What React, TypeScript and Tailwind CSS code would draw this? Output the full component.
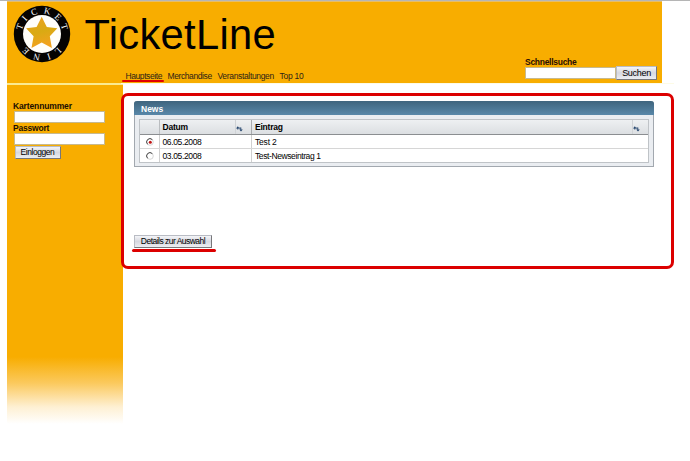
import type { ReactNode } from 'react';

function Logo() {
  return (
    <svg className="block h-[58px] w-[58px] shrink-0" viewBox="0 0 58 58">
      <defs>
        <linearGradient id="star" x1="0" y1="0" x2="0.25" y2="1">
          <stop offset="0" stopColor="#f0a023" />
          <stop offset="0.55" stopColor="#d9aa13" />
          <stop offset="1" stopColor="#f2a21e" />
        </linearGradient>
      </defs>
      <circle cx="29" cy="29" r="28.2" fill="#050302" />
      <circle cx="29" cy="29" r="19" fill="#fffefa" />
      <path
        d="M28.7 11.8 L33.8 22 L44.3 23.3 L36.8 31.2 L38.9 43 L28.7 37.6 L18.5 43 L20.6 31.2 L13.1 23.3 L23.6 22 Z"
        fill="url(#star)"
      />
      <g fill="#fff" fontSize="9" fontFamily="Liberation Serif, serif" textAnchor="middle">
        <text transform="rotate(-72 29 29)" x="29" y="8.5">T</text>
        <text transform="rotate(-48 29 29)" x="29" y="8.5">I</text>
        <text transform="rotate(-20 29 29)" x="29" y="8.5">C</text>
        <text transform="rotate(13 29 29)" x="29" y="8.5">K</text>
        <text transform="rotate(43 29 29)" x="29" y="8.5">E</text>
        <text transform="rotate(72 29 29)" x="29" y="8.5">T</text>
        <text transform="rotate(137 29 29)" x="29" y="8.5">L</text>
        <text transform="rotate(163 29 29)" x="29" y="8.5">I</text>
        <text transform="rotate(193 29 29)" x="29" y="8.5">N</text>
        <text transform="rotate(224 29 29)" x="29" y="8.5">E</text>
      </g>
    </svg>
  );
}

function Button({ children, className }: { children: ReactNode; className: string }) {
  return (
    <button
      className={`block whitespace-nowrap border border-t-[#b9bcc4] border-l-[#b9bcc4] border-r-[#77777a] border-b-[#77777a] bg-linear-to-b from-[#f4f5f8] via-[#d6d8e0] to-[#eceef2] text-center text-black ${className}`}
    >
      {children}
    </button>
  );
}

function SortIcon() {
  return (
    <svg className="block h-[6px] w-[7px]" viewBox="0 0 7 6">
      <path d="M0 2.4 L1.8 0.3 L3.6 2.4 H2.3 V3.6 H1.3 V2.4 Z M3.2 1.6 H5.3 V3.4 H6.8 L5 5.6 L3.2 3.4 H4.4 V2.5 H3.2 Z" fill="#27476f" />
    </svg>
  );
}

function Radio({ checked }: { checked?: boolean }) {
  return (
    <svg className="block h-2 w-2" viewBox="0 0 8 8">
      <circle cx="4" cy="4" r="3.3" fill="#fff" stroke="#d2d2d2" strokeWidth="0.9" />
      <path d="M1.6 6.3 A3.3 3.3 0 0 1 6.3 1.6" fill="none" stroke="#4a4a4a" strokeWidth="1" />
      {checked && <circle cx="4.3" cy="4.2" r="1.5" fill="#c01515" />}
    </svg>
  );
}

const news = [
  { date: '06.05.2008', title: 'Test 2', tracking: 'tracking-[-0.2px]' },
  { date: '03.05.2008', title: 'Test-Newseintrag 1', tracking: 'tracking-[-0.4px]' },
];

export default function App() {
  return (
    <div className="h-[461px] w-[690px] overflow-hidden bg-white font-['Liberation_Sans',Arial,sans-serif] text-[8.5px] leading-[10px] text-black">
      <div className="h-px bg-[#b5b5b5]" />
      <header className="ml-[7px] flex h-[82px] w-[655px] border-t border-[#e6bd68] bg-[#f8ad00]">
        <div className="pt-[3px] pl-[6px]">
          <Logo />
        </div>
        <div className="ml-[13.5px] w-[430px]">
          <h1 className="h-[66px] pt-[9px] text-[41.7px] leading-[48px] tracking-[0.3px]">TicketLine</h1>
          <nav className="ml-[37px] flex h-[16px] whitespace-nowrap text-[#2d2316]">
            <a className="flex w-[42px] flex-col">
              <span className="block h-[12px] pl-[4px] pt-[3px] tracking-[-0.42px]">Hauptseite</span>
              <span className="block h-[2px] w-[42px] shrink-0 rounded-full bg-[#e00000]" />
            </a>
            <a className="ml-[4px] w-[50px] pt-[3px] tracking-[-0.4px]">Merchandise</a>
            <a className="w-[62px] pt-[3px] tracking-[-0.34px]">Veranstaltungen</a>
            <a className="pt-[3px] tracking-[-0.25px]">Top 10</a>
          </nav>
        </div>
        <form className="ml-[10.5px] w-[133px] pt-[55px]">
          <label className="block h-[9px] whitespace-nowrap font-bold tracking-[-0.28px] text-[#2a0d05]">Schnellsuche</label>
          <div className="flex">
            <div className="mt-[1px] h-[12px] w-[91px] border border-[#c7b98e] bg-white" />
            <Button className="h-[14px] w-[41px] text-[9px] leading-[13px] tracking-[-0.3px]">Suchen</Button>
          </div>
        </form>
      </header>
      <div className="flex pl-[7px]">
        <aside className="h-[341px] w-[116px] shrink-0 border-t-2 border-[#fbea91] bg-[linear-gradient(to_bottom,#f8ad00_0,#f8ad00_272px,#fbc95d_298px,#fef0d3_322px,#fff_339px)] pl-[6px] pt-[16px]">
          <label className="block h-[10px] font-bold tracking-[-0.13px] text-[#200d00]">Kartennummer</label>
          <div className="ml-px h-[12px] w-[91px] border border-[#c7b98e] bg-white" />
          <label className="block h-[10px] font-bold tracking-[-0.2px] text-[#200d00]">Passwort</label>
          <div className="ml-px h-[12px] w-[91px] border border-[#c7b98e] bg-white" />
          <Button className="ml-[1.5px] mt-px h-[13px] w-[46px] leading-[11px] tracking-[-0.45px]">Einloggen</Button>
        </aside>
        <div className="-ml-[2px] w-[553px]">
          <div className="h-[2px] w-full border-t border-[#fdfbe6]" />
          <main className="mt-[8px] h-[176px] rounded-[7px] border-[3px] border-[#dc0000] pl-[10px] pt-[5px]">
            <section className="h-[66px] w-[520px] rounded-t-[3px] border border-[#a2a8af] border-t-0 bg-[#eaedf1]">
              <h2 className="-mx-px h-[14px] rounded-t-[3px] bg-linear-to-b from-[#3f657e] to-[#5988a9] pl-[7px] pt-[3px] font-bold text-white">News</h2>
              <div className="ml-[4px] mt-[4px] w-[510px] border border-[#bfc3c7] bg-white">
                <div className="flex h-[15px] border-b border-[#8b8e91] bg-linear-to-b from-[#eef0f2] to-[#dcdfe2] font-bold leading-[15px] tracking-[-0.22px]">
                  <div className="w-[20px] border-r border-[#babdc0]" />
                  <div className="w-[75px] pl-[2.5px]">Datum</div>
                  <div className="w-[17px] border-l border-[#d0d3d6] border-r border-r-[#a9acaf] pt-[6px]">
                    <SortIcon />
                  </div>
                  <div className="w-[380px] pl-[3px]">Eintrag</div>
                  <div className="grow border-l border-[#d0d3d6] pt-[6px]">
                    <SortIcon />
                  </div>
                </div>
                {news.map((item, i) => (
                  <div key={item.date} className={`flex leading-[14px] ${i === 0 ? 'h-[14px] border-b border-[#d6d6d6]' : 'h-[13px]'}`}>
                    <div className="w-[20px] border-r border-[#d0d0d0] pl-[6px] pt-[3px]">
                      <Radio checked={i === 0} />
                    </div>
                    <div className="w-[92px] border-r border-[#d0d0d0] pl-[2.5px] tracking-[-0.37px]">{item.date}</div>
                    <div className={`pl-[3px] ${item.tracking}`}>{item.title}</div>
                  </div>
                ))}
              </div>
            </section>
            <Button className="mt-[68px] h-[13px] w-[78px] tracking-[-0.52px] leading-[11px]">Details zur Auswahl</Button>
            <div className="-ml-[2px] mt-px h-[3px] w-[84px] rounded-full bg-[#dc0000]" />
          </main>
        </div>
      </div>
    </div>
  );
}
